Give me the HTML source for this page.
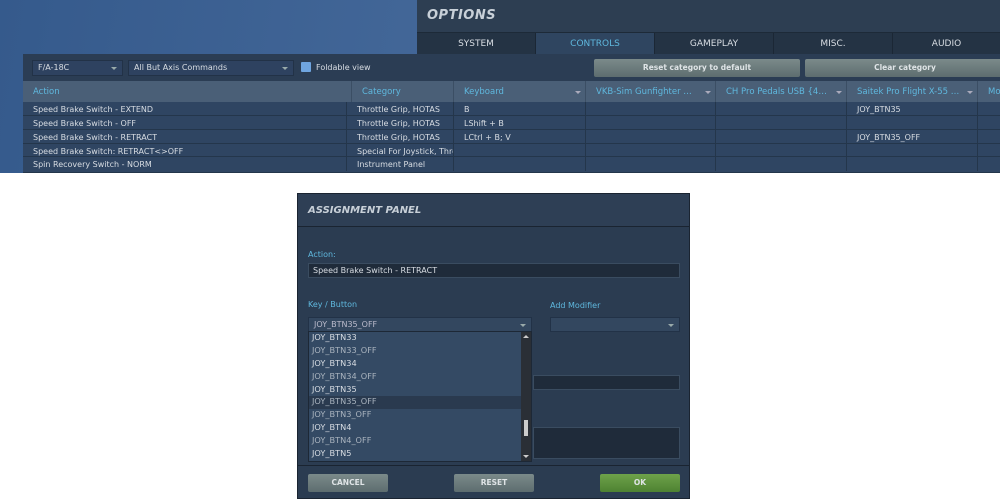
<!DOCTYPE html>
<html><head><style>
*{margin:0;padding:0;box-sizing:border-box}
body{width:1000px;height:501px;background:#fff;font-family:"DejaVu Sans","Liberation Sans",sans-serif;font-size:8px;color:#d8dde3;position:relative;overflow:hidden}
.abs{position:absolute}
.top{left:0;top:0;width:1000px;height:173px;background:linear-gradient(100deg,#355a8c 0%,#45699a 50%,#3c5f90 100%)}
.opt{left:417px;top:0;width:583px;height:54px;background:#2d3e52}
.opttitle{left:427px;top:8px;font-size:13px;font-weight:bold;font-style:italic;color:#c8d0d8;letter-spacing:.5px}
.tabs{left:417px;top:32px;width:583px;height:22px;background:#243344;border-top:1px solid #1d2a38}
.tab{position:absolute;top:0;height:22px;line-height:22px;text-align:center;font-size:9px;color:#d8dde3;border-right:1px solid #1b2735}
.main{left:23px;top:54px;width:977px;height:119px;background:#2b3d54}
.sel{position:absolute;height:16px;background:#2e4260;border:1px solid #223247;line-height:14px;padding-left:5px;font-size:8px}
.sel:after{content:"";position:absolute;right:5px;top:6px;border:3px solid transparent;border-top:3px solid #9aa;}
.btn{position:absolute;height:18px;line-height:18px;text-align:center;font-weight:bold;font-size:7.5px;color:#dfe4e6;background:linear-gradient(#7b8a8a,#5d6d6f);border-radius:2px}
.hdr{left:23px;top:81px;width:977px;height:21px;background:#4a5f77}
.hc{position:absolute;top:0;height:21px;line-height:23px;padding-left:10px;color:#5fb8de;font-size:8.5px;border-left:1px solid #3b4e64;white-space:nowrap}
.hc span{display:block;overflow:hidden;text-overflow:ellipsis;white-space:nowrap}
.hc.a{padding-right:16px}
.hc.a:after{content:"";position:absolute;right:4px;top:10px;border:3px solid transparent;border-top:3px solid #aab;}
.row{position:absolute;left:23px;width:977px;height:13.7px;line-height:15px;border-bottom:1px solid #24364b;background:#2f4562}
.c{position:absolute;top:0;height:13.7px;padding-left:10px;border-left:1px solid #24364b;white-space:nowrap;overflow:hidden}
.panel{left:297px;top:193px;width:393px;height:306px;background:#2b3c51;border:1px solid #1a2431}
.lbl{position:absolute;color:#5fb8de;font-size:8px}
.field{position:absolute;background:#1f2b3a;border:1px solid #3a4c60}
.item{height:12.9px;line-height:11px;padding-left:3px;font-size:8.2px}
</style></head><body>
<div class="abs top"></div>
<div class="abs opt"></div>
<div class="abs opttitle">OPTIONS</div>
<div class="abs tabs">
<div class="tab" style="left:0;width:119px">SYSTEM</div>
<div class="tab" style="left:119px;width:119px;background:#2f4560;color:#5fb8de">CONTROLS</div>
<div class="tab" style="left:238px;width:119px">GAMEPLAY</div>
<div class="tab" style="left:357px;width:119px">MISC.</div>
<div class="tab" style="left:476px;width:107px;border:none">AUDIO</div>
</div>
<div class="abs main">
<div class="sel" style="left:9px;top:6px;width:91px">F/A-18C</div>
<div class="sel" style="left:105px;top:6px;width:166px">All But Axis Commands</div>
<div class="abs" style="left:278px;top:8px;width:10px;height:10px;background:#6fa5e0;border-radius:1px"></div>
<div class="abs" style="left:293px;top:9px;font-size:8px">Foldable view</div>
<div class="btn" style="left:571px;top:5px;width:206px">Reset category to default</div>
<div class="btn" style="left:782px;top:5px;width:200px">Clear category</div>
</div>
<div class="abs hdr">
<div class="hc" style="left:0;width:328px;border:none"><span>Action</span></div>
<div class="hc" style="left:328px;width:102px"><span>Category</span></div>
<div class="hc a" style="left:430px;width:132px"><span>Keyboard</span></div>
<div class="hc a" style="left:562px;width:130px"><span>VKB-Sim Gunfighter Mode...</span></div>
<div class="hc a" style="left:692px;width:131px"><span>CH Pro Pedals USB {4E8F...</span></div>
<div class="hc a" style="left:823px;width:131px"><span>Saitek Pro Flight X-55 Rhin...</span></div>
<div class="hc" style="left:954px;width:30px"><span>Mo</span></div>
</div>
<div class="row" style="top:102px"><div class="c" style="left:0;border:none">Speed Brake Switch - EXTEND</div><div class="c" style="left:323px">Throttle Grip, HOTAS</div><div class="c" style="left:430px">B</div><div class="c" style="left:562px;width:130px"></div><div class="c" style="left:692px;width:131px"></div><div class="c" style="left:823px">JOY_BTN35</div><div class="c" style="left:954px"></div></div>
<div class="row" style="top:116px"><div class="c" style="left:0;border:none">Speed Brake Switch - OFF</div><div class="c" style="left:323px">Throttle Grip, HOTAS</div><div class="c" style="left:430px">LShift + B</div><div class="c" style="left:562px;width:130px"></div><div class="c" style="left:692px;width:131px"></div><div class="c" style="left:823px"></div><div class="c" style="left:954px"></div></div>
<div class="row" style="top:130px"><div class="c" style="left:0;border:none">Speed Brake Switch - RETRACT</div><div class="c" style="left:323px">Throttle Grip, HOTAS</div><div class="c" style="left:430px">LCtrl + B; V</div><div class="c" style="left:562px;width:130px"></div><div class="c" style="left:692px;width:131px"></div><div class="c" style="left:823px">JOY_BTN35_OFF</div><div class="c" style="left:954px"></div></div>
<div class="row" style="top:143.5px"><div class="c" style="left:0;border:none">Speed Brake Switch: RETRACT&lt;&gt;OFF</div><div class="c" style="left:323px;width:107px">Special For Joystick, Throttle</div><div class="c" style="left:430px"></div><div class="c" style="left:562px;width:130px"></div><div class="c" style="left:692px;width:131px"></div><div class="c" style="left:823px"></div><div class="c" style="left:954px"></div></div>
<div class="row" style="top:157px;height:16px"><div class="c" style="left:0;border:none">Spin Recovery Switch - NORM</div><div class="c" style="left:323px">Instrument Panel</div><div class="c" style="left:430px"></div><div class="c" style="left:562px;width:130px"></div><div class="c" style="left:692px;width:131px"></div><div class="c" style="left:823px"></div><div class="c" style="left:954px"></div></div>

<div class="abs panel">
<div class="abs" style="left:0;top:0;width:391px;height:33px;border-bottom:1px solid #1a2431;background:#2e3f55"></div>
<div class="abs" style="left:10px;top:11px;font-size:10px;font-weight:bold;font-style:italic;color:#c8d0d8">ASSIGNMENT PANEL</div>
<div class="lbl" style="left:10px;top:56px">Action:</div>
<div class="field" style="left:10px;top:69px;width:372px;height:15px;line-height:13px;padding-left:4px;font-size:8px">Speed Brake Switch - RETRACT</div>
<div class="lbl" style="left:10px;top:106px">Key / Button</div>
<div class="lbl" style="left:252px;top:107px">Add Modifier</div>
<div class="sel" style="left:10px;top:123px;width:224px;height:15px;background:#33475f;color:#bbc">JOY_BTN35_OFF</div>
<div class="sel" style="left:252px;top:123px;width:130px;height:15px;background:#33475f"></div>
<div class="field" style="left:235px;top:181px;width:147px;height:15px"></div>
<div class="field" style="left:235px;top:233px;width:147px;height:32px"></div>
<div class="abs" style="left:10px;top:137px;width:224px;height:131px;background:#344a64;border:1px solid #1d2836">
<div class="item">JOY_BTN33</div>
<div class="item" style="color:#aab4bf">JOY_BTN33_OFF</div>
<div class="item">JOY_BTN34</div>
<div class="item" style="color:#aab4bf">JOY_BTN34_OFF</div>
<div class="item">JOY_BTN35</div>
<div class="item" style="color:#aab4bf;background:#2a3a4f">JOY_BTN35_OFF</div>
<div class="item" style="color:#aab4bf">JOY_BTN3_OFF</div>
<div class="item">JOY_BTN4</div>
<div class="item" style="color:#aab4bf">JOY_BTN4_OFF</div>
<div class="item">JOY_BTN5</div>
<div class="abs" style="right:0;top:0;width:10px;height:129px;background:#2a2f36"></div>
<div class="abs" style="right:2px;top:3px;border:3px solid transparent;border-bottom:3px solid #ccc;border-top:none"></div>
<div class="abs" style="right:3px;top:88px;width:4px;height:16px;background:#ccc"></div>
<div class="abs" style="right:2px;top:123px;border:3px solid transparent;border-top:3px solid #ccc;border-bottom:none"></div>
</div>
<div class="abs" style="left:0;top:271px;width:391px;height:1px;background:#1a2431"></div>
<div class="btn" style="left:10px;top:280px;width:80px">CANCEL</div>
<div class="btn" style="left:156px;top:280px;width:80px">RESET</div>
<div class="btn" style="left:302px;top:280px;width:80px;background:linear-gradient(#6ea24a,#4e8232)">OK</div>
</div>
</body></html>
